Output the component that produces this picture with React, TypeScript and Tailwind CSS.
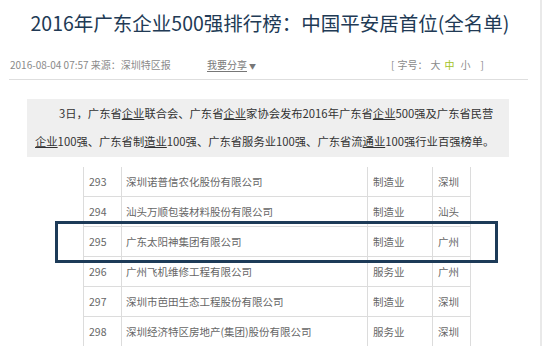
const rows = [
  { no: "293", name: "深圳诺普信农化股份有限公司", type: "制造业", city: "深圳" },
  { no: "294", name: "汕头万顺包装材料股份有限公司", type: "制造业", city: "汕头" },
  { no: "295", name: "广东太阳神集团有限公司", type: "制造业", city: "广州" },
  { no: "296", name: "广州飞机维修工程有限公司", type: "服务业", city: "广州" },
  { no: "297", name: "深圳市芭田生态工程股份有限公司", type: "制造业", city: "深圳" },
  { no: "298", name: "深圳经济特区房地产(集团)股份有限公司", type: "服务业", city: "深圳" },
];

const font = "font-['Noto_Sans_CJK_SC','Noto_Sans',sans-serif]";

export default function App() {
  return (
    <div className={`relative h-[346px] w-[548px] overflow-hidden bg-white ${font}`}>
      <div className="h-[346px] w-[542px] border-r-2 border-[#e9e9e9]">
        <h1 className="pt-[9px] text-center text-[19.5px] leading-[28px] text-[#213a55]">
          2016年广东企业500强排行榜：中国平安居首位(全名单)
        </h1>

        <div className="mt-[21px] flex pl-[10px] text-[10px] leading-[14px] text-[#8a8a8a]">
          <span className="w-[197px]">2016-08-04 07:57 来源：深圳特区报</span>
          <span className="w-[184px] text-[#777]">
            <span className="underline underline-offset-2">我要分享</span>
            <span className="ml-[2px] text-[7px]">▼</span>
          </span>
          <span className="flex">
            <span>[</span>
            <span className="ml-[3px]">字号：</span>
            <span className="ml-[3px]">大</span>
            <span className="ml-[4px] text-[#a3c21e]">中</span>
            <span className="ml-[6px]">小</span>
            <span className="ml-[10px]">]</span>
          </span>
        </div>

        <div className="ml-[9px] mt-[6px] w-[519px] border-b border-[#dedede]" />

        <div className="ml-[27px] mt-[19px] h-[58px] w-[482px] bg-[#efefef] pl-[8px] text-[11.3px] leading-[28px] text-[#333]">
          <p className="indent-[24px] whitespace-nowrap">
            3日，广东省<span className="underline">企业</span>联合会、广东省
            <span className="underline">企业</span>家协会发布2016年广东省
            <span className="underline">企业</span>500强及广东省民营
          </p>
          <p className="whitespace-nowrap">
            <span className="underline">企业</span>100强、广东省制<span className="underline">造业</span>
            100强、广东省服务业100强、广东省流<span className="underline">通业</span>100强行业百强榜单。
          </p>
        </div>

        <div className="ml-[83px] mt-[10px] w-[388px] text-[10.5px] text-[#666]">
          {rows.map((r) => (
            <div key={r.no} className="flex h-[30px] items-center border-b border-[#dcdcdc]">
              <div className="flex h-full w-[38px] items-center border-l border-[#dcdcdc] pl-[5px]">
                {r.no}
              </div>
              <div className="flex h-full w-[246px] items-center whitespace-nowrap border-l border-[#dcdcdc] pl-[4px]">
                {r.name}
              </div>
              <div className="flex h-full w-[65px] items-center border-l border-[#dcdcdc] pl-[5px]">
                {r.type}
              </div>
              <div className="flex h-full w-[39px] items-center border-x border-[#dcdcdc] pl-[5px]">
                {r.city}
              </div>
            </div>
          ))}
        </div>
      </div>

      {/* highlight frame over row 295 */}
      <div className="absolute left-[55px] top-[221px] h-[42px] w-[443px] border-[3px] border-[#1d3b58]" />
    </div>
  );
}
